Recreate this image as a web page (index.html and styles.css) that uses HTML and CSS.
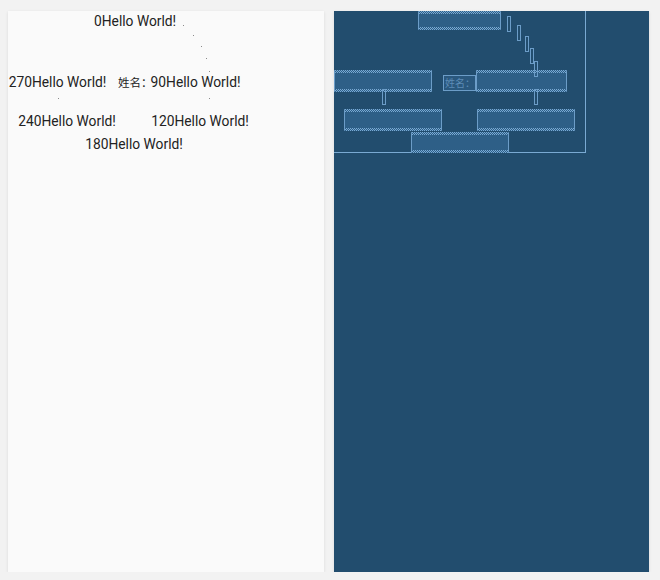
FILE: index.html
```html
<!DOCTYPE html>
<html>
<head>
<meta charset="utf-8">
<link rel="stylesheet" href="styles.css">
</head>
<body>
<div class="stage">
  <div class="panel design">
    <div class="canvas">
      <div class="tv" style="left:86px;top:0;width:82px">0Hello World!</div>
      <div class="tv" style="left:0;top:61px;width:99px">270Hello World!</div>
      <div class="tv cjk" style="left:110px;top:64px;width:33px">姓名：</div>
      <div class="tv" style="left:142px;top:61px;width:91px">90Hello World!</div>
      <div class="tv" style="left:10px;top:100px;width:98px">240Hello World!</div>
      <div class="tv" style="left:143px;top:100px;width:98px">120Hello World!</div>
      <div class="tv" style="left:77px;top:123px;width:98px">180Hello World!</div>
      <span class="dot" style="left:175px;top:14px"></span>
      <span class="dot" style="left:185px;top:24px"></span>
      <span class="dot" style="left:193px;top:35px"></span>
      <span class="dot" style="left:198px;top:47px"></span>
      <span class="dot" style="left:201px;top:60px"></span>
      <span class="dot" style="left:201px;top:87px"></span>
      <span class="dot" style="left:50px;top:87px"></span>
    </div>
  </div>
  <div class="panel blueprint">
    <div class="canvas bp-root">
      <div class="bx" style="left:84px;top:0;width:83px;height:19px"></div>
      <div class="bx" style="left:0;top:59px;width:98px;height:22px"></div>
      <div class="bl" style="left:109px;top:64px;width:33px;height:16px">姓名：</div>
      <div class="bx" style="left:142px;top:59px;width:91px;height:22px"></div>
      <div class="bx" style="left:10px;top:98px;width:98px;height:22px"></div>
      <div class="bx" style="left:143px;top:98px;width:98px;height:22px"></div>
      <div class="bx" style="left:77px;top:121px;width:98px;height:21px"></div>
      <span class="rc" style="left:173px;top:5px"></span>
      <span class="rc" style="left:183px;top:14px"></span>
      <span class="rc" style="left:191px;top:25px"></span>
      <span class="rc" style="left:196px;top:37px"></span>
      <span class="rc" style="left:200px;top:50px"></span>
      <span class="rc" style="left:200px;top:78px"></span>
      <span class="rc" style="left:48px;top:78px"></span>
    </div>
  </div>
</div>
</body>
</html>
```
FILE: styles.css
```css
html, body {
  margin: 0;
  padding: 0;
  background: #f2f2f2;
}
.stage {
  display: flex;
  gap: 10px;
  padding: 11px 0 0 8px;
}
.panel {
  height: 561px;
  box-shadow: 0 1px 3px rgba(0,0,0,0.10);
}
.design {
  width: 316px;
  background: #fafafa;
}
.blueprint {
  width: 315px;
  background: #224d6e;
}
.canvas {
  position: relative;
  width: 252px;
  height: 142px;
}
.tv {
  position: absolute;
  height: 20px;
  line-height: 20px;
  text-align: center;
  white-space: nowrap;
  font-family: Roboto, "Noto Sans CJK SC", sans-serif;
  font-size: 13.8px;
  color: #222;
}
.tv.cjk {
  font-size: 11.5px;
  height: 15px;
  line-height: 15px;
  font-family: "Noto Sans CJK SC", sans-serif;
  text-align: left;
}
.dot {
  position: absolute;
  width: 1px;
  height: 1px;
  background: #8a8a8a;
}
.bp-root {
  box-sizing: border-box;
  border-right: 1px solid #7aaad3;
  border-bottom: 1px solid #7aaad3;
}
.bx {
  position: absolute;
  box-sizing: border-box;
  background-color: #2e5f87;
  border-left: 1px solid #6c9dc8;
  border-right: 1px solid #6c9dc8;
  border-radius: 1px;
  background-image:
    repeating-linear-gradient(90deg, #7aaad4 0 1px, transparent 1px 2px),
    repeating-linear-gradient(90deg, transparent 0 1px, #7aaad4 1px 2px),
    repeating-linear-gradient(90deg, #7aaad4 0 1px, transparent 1px 2px),
    repeating-linear-gradient(90deg, transparent 0 1px, #7aaad4 1px 2px),
    repeating-linear-gradient(90deg, #7aaad4 0 1px, transparent 1px 2px),
    repeating-linear-gradient(90deg, transparent 0 1px, #7aaad4 1px 2px);
  background-size: 100% 1px;
  background-repeat: no-repeat;
  background-position: 0 0, 0 1px, 0 2px, 0 calc(100% - 2px), 0 calc(100% - 1px), 0 100%;
}
.bl {
  position: absolute;
  box-sizing: border-box;
  border: 1px solid #6c9dc8;
  background: #2a587e;
  font-family: "Noto Sans CJK SC", sans-serif;
  font-size: 10px;
  line-height: 14px;
  color: #5d8cb6;
  padding-left: 1px;
  white-space: nowrap;
  overflow: hidden;
}
.rc {
  position: absolute;
  box-sizing: border-box;
  width: 4px;
  height: 16px;
  border: 1px solid #6c9dc8;
}
```
